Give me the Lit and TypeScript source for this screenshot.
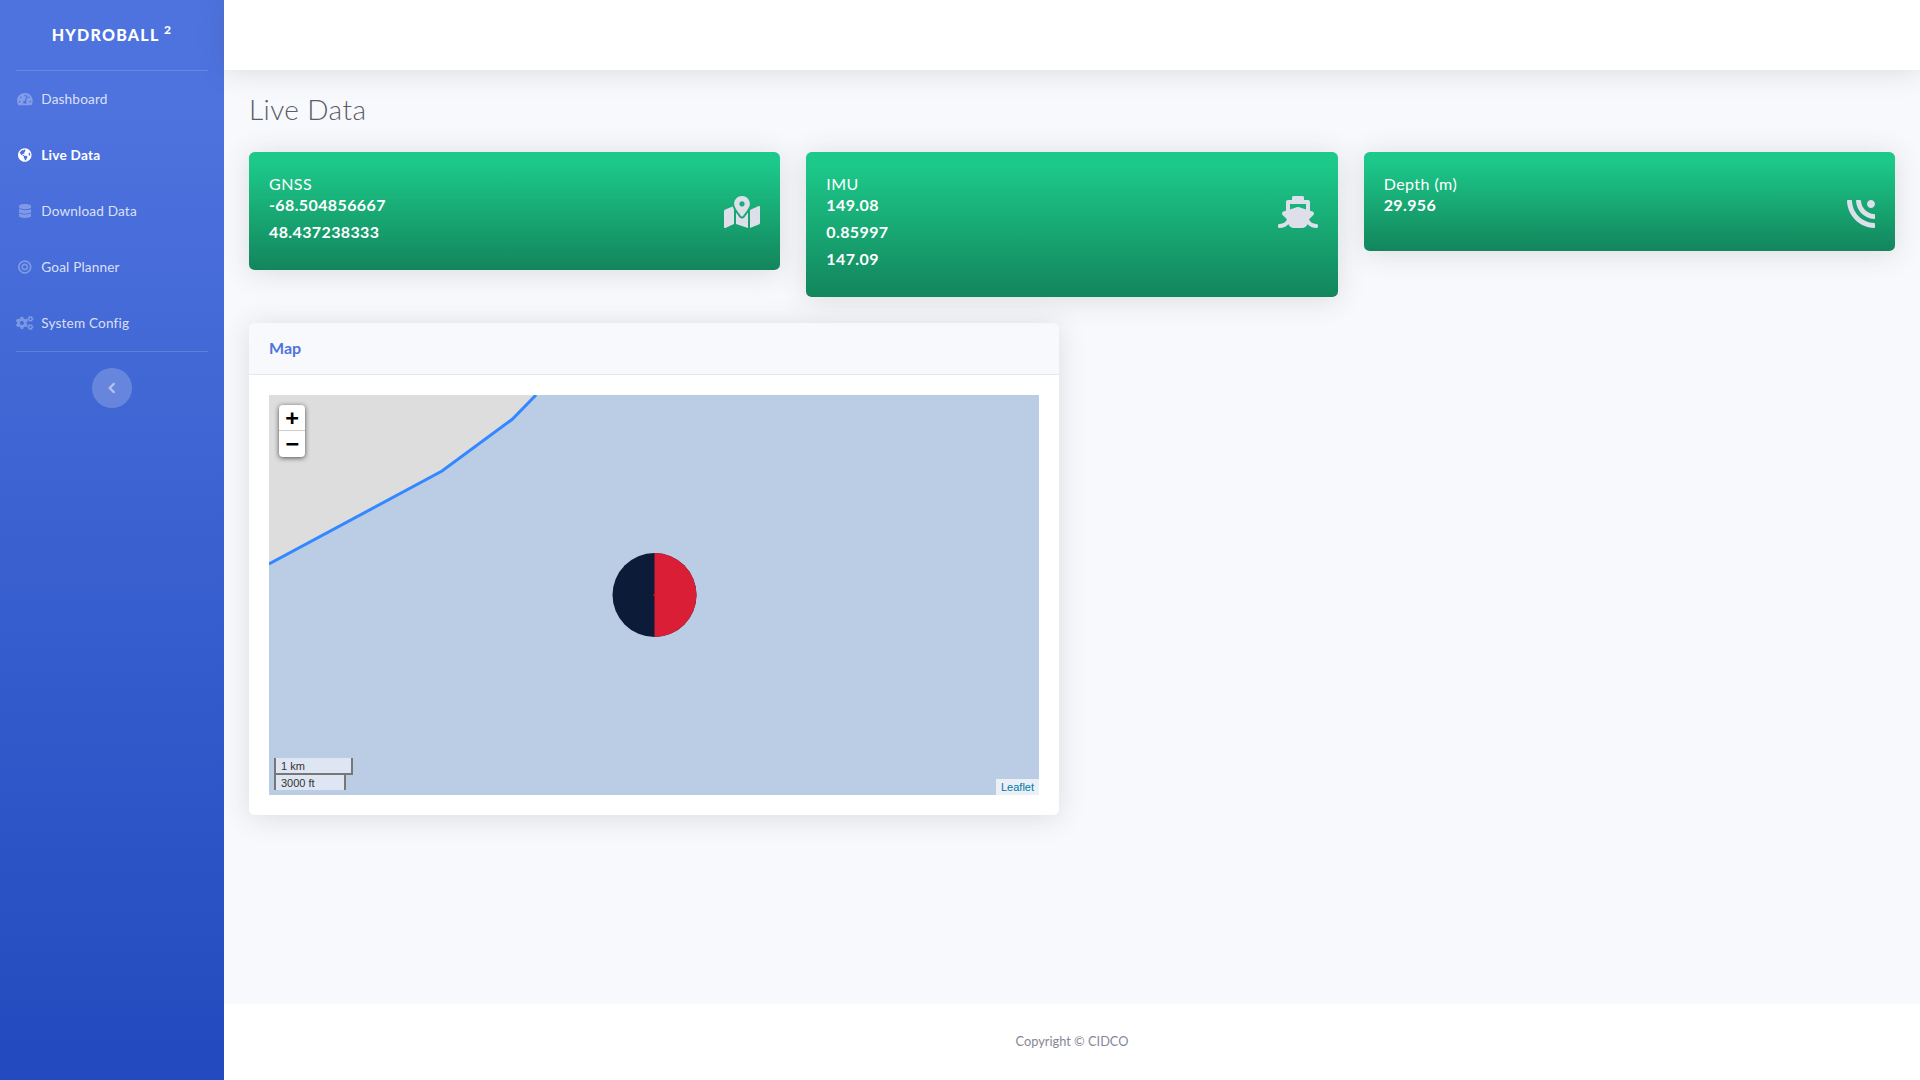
import { LitElement, html, css, svg } from "lit";
import { customElement } from "lit/decorators.js";

const ICONS: Record<string, [number, string]> = {
  dash: [576, "M288 32C128.94 32 0 160.94 0 320c0 52.8 14.25 102.26 39.06 144.8 5.61 9.62 16.3 15.2 27.44 15.2h443c11.14 0 21.83-5.58 27.44-15.2C561.75 422.26 576 372.8 576 320c0-159.06-128.94-288-288-288zm0 64c14.71 0 26.58 10.13 30.32 23.65-1.11 2.26-2.64 4.23-3.45 6.67l-9.22 27.67c-5.13 3.49-10.97 6.01-17.64 6.01-17.67 0-32-14.33-32-32S270.33 96 288 96zM96 384c-17.67 0-32-14.33-32-32s14.33-32 32-32 32 14.33 32 32-14.33 32-32 32zm48-160c-17.67 0-32-14.33-32-32s14.33-32 32-32 32 14.33 32 32-14.33 32-32 32zm246.77-72.41l-61.33 184C343.13 347.33 352 364.54 352 384c0 11.72-3.38 22.55-8.88 32H232.88c-5.5-9.45-8.88-20.28-8.88-32 0-33.94 26.5-61.43 59.9-63.59l61.34-184.01c4.17-12.56 17.73-19.45 30.36-15.17 12.57 4.19 19.35 17.79 15.17 30.36zm14.66 57.2l15.52-46.55c3.47-1.29 7.13-2.23 11.05-2.23 17.67 0 32 14.33 32 32s-14.33 32-32 32c-11.38-.01-20.89-6.28-26.57-15.22zM480 384c-17.67 0-32-14.33-32-32s14.33-32 32-32 32 14.33 32 32-14.33 32-32 32z"],
  globe: [496, "M248 8C111.03 8 0 119.03 0 256s111.03 248 248 248 248-111.03 248-248S384.97 8 248 8zm82.29 357.6c-3.9 3.88-7.99 7.95-11.31 11.28-2.99 3-5.1 6.7-6.17 10.71-1.51 5.66-2.73 11.38-4.77 16.87l-17.39 46.85c-13.76 3-28 4.69-42.65 4.69v-27.38c1.69-12.62-7.64-36.26-22.63-51.25-6-6-9.37-14.14-9.37-22.63v-32.01c0-11.64-6.27-22.34-16.46-27.97-14.37-7.95-34.81-19.06-48.81-26.11-11.48-5.78-22.1-13.14-31.65-21.75l-.8-.72a114.792 114.792 0 0 1-18.06-20.74c-9.38-13.77-24.66-36.42-34.59-51.14 20.47-45.5 57.36-82.04 103.2-101.89l24.01 12.01C203.48 89.74 216 82.01 216 70.11v-11.3c7.99-1.29 16.12-2.11 24.39-2.42l28.3 28.3c6.25 6.25 6.25 16.38 0 22.63L264 112l-10.34 10.34c-3.12 3.12-3.12 8.19 0 11.31l4.69 4.69c3.12 3.12 3.12 8.19 0 11.31l-8 8a8.008 8.008 0 0 1-5.66 2.34h-8.99c-2.08 0-4.08.81-5.58 2.27l-9.92 9.65a8.008 8.008 0 0 0-1.58 9.31l15.59 31.19c2.66 5.32-1.21 11.58-7.15 11.58h-5.64c-1.93 0-3.79-.7-5.24-1.96l-9.28-8.06a16.017 16.017 0 0 0-15.55-3.1l-31.17 10.39a11.95 11.95 0 0 0-8.17 11.34c0 4.53 2.56 8.66 6.61 10.69l11.08 5.54c9.41 4.71 19.79 7.16 30.31 7.16s22.59 27.29 32 32h66.75c8.49 0 16.62 3.37 22.63 9.37l13.69 13.69a30.503 30.503 0 0 1 8.93 21.57 46.536 46.536 0 0 1-13.72 32.98zM417 274.25c-5.79-1.45-10.84-5-14.15-9.97l-17.98-26.97a23.97 23.97 0 0 1 0-26.62l19.59-29.38c2.32-3.47 5.5-6.29 9.24-8.15l12.98-6.49C440.2 193.59 448 223.87 448 256c0 8.67-.74 17.16-1.82 25.54L417 274.25z"],
  db: [448, "M448 73.143v45.714C448 159.143 347.667 192 224 192S0 159.143 0 118.857V73.143C0 32.857 100.333 0 224 0s224 32.857 224 73.143zM448 176v102.857C448 319.143 347.667 352 224 352S0 319.143 0 278.857V176c48.125 33.143 136.208 48.572 224 48.572S399.874 209.143 448 176zm0 160v102.857C448 479.143 347.667 512 224 512S0 479.143 0 438.857V336c48.125 33.143 136.208 48.572 224 48.572S399.874 369.143 448 336z"],
  bull: [496, "M248 8C111.03 8 0 119.03 0 256s111.03 248 248 248 248-111.03 248-248S384.97 8 248 8zm0 432c-101.69 0-184-82.29-184-184 0-101.69 82.29-184 184-184 101.69 0 184 82.29 184 184 0 101.69-82.29 184-184 184zm0-312c-70.69 0-128 57.31-128 128s57.31 128 128 128 128-57.31 128-128-57.31-128-128-128zm0 192c-35.29 0-64-28.71-64-64s28.71-64 64-64 64 28.71 64 64-28.71 64-64 64z"],
  cogs: [640, "M512.1 191l-8.2 14.3c-3 5.3-9.4 7.5-15.1 5.4-11.8-4.4-22.6-10.7-32.1-18.6-4.6-3.8-5.8-10.5-2.8-15.7l8.2-14.3c-6.9-8-12.3-17.3-15.9-27.4h-16.5c-6 0-11.2-4.3-12.2-10.3-2-12-2.1-24.6 0-37.1 1-6 6.2-10.4 12.2-10.4h16.5c3.6-10.1 9-19.4 15.9-27.4l-8.2-14.3c-3-5.2-1.9-11.9 2.8-15.7 9.5-7.9 20.4-14.2 32.1-18.6 5.7-2.1 12.1.1 15.1 5.4l8.2 14.3c10.5-1.9 21.2-1.9 31.7 0L552 6.3c3-5.3 9.4-7.5 15.1-5.4 11.8 4.4 22.6 10.7 32.1 18.6 4.6 3.8 5.8 10.5 2.8 15.7l-8.2 14.3c6.9 8 12.3 17.3 15.9 27.4h16.5c6 0 11.2 4.3 12.2 10.3 2 12 2.1 24.6 0 37.1-1 6-6.2 10.4-12.2 10.4h-16.5c-3.6 10.1-9 19.4-15.9 27.4l8.2 14.3c3 5.2 1.9 11.9-2.8 15.7-9.5 7.9-20.4 14.2-32.1 18.6-5.7 2.1-12.1-.1-15.1-5.4l-8.2-14.3c-10.4 1.9-21.2 1.9-31.7 0zm-10.5-58.8c38.5 29.6 82.4-14.3 52.8-52.8-38.5-29.7-82.4 14.3-52.8 52.8zM386.3 286.1l33.7 16.8c10.1 5.8 14.5 18.1 10.5 29.1-8.9 24.2-26.4 46.4-42.6 65.8-7.4 8.9-20.2 11.1-30.3 5.3l-29.1-16.8c-16 13.7-34.6 24.6-54.9 31.7v33.6c0 11.6-8.3 21.6-19.7 23.6-24.6 4.2-50.4 4.4-75.9 0-11.5-2-20-11.9-20-23.6V418c-20.3-7.2-38.9-18-54.9-31.7L74 403c-10 5.8-22.9 3.6-30.3-5.3-16.2-19.4-33.3-41.6-42.2-65.7-4-10.9.4-23.2 10.5-29.1l33.3-16.8c-3.9-20.9-3.9-42.4 0-63.4L12 205.8c-10.1-5.8-14.6-18.1-10.5-29 8.9-24.2 26-46.4 42.2-65.8 7.4-8.9 20.2-11.1 30.3-5.3l29.1 16.8c16-13.7 34.6-24.6 54.9-31.7V57.1c0-11.5 8.2-21.5 19.6-23.5 24.6-4.2 50.5-4.4 76-.1 11.5 2 20 11.9 20 23.6v33.6c20.3 7.2 38.9 18 54.9 31.7l29.1-16.8c10-5.8 22.9-3.6 30.3 5.3 16.2 19.4 33.2 41.6 42.1 65.8 4 10.9.1 23.2-10 29.1l-33.7 16.8c3.9 21 3.9 42.5 0 63.5zm-117.6 21.1c59.2-77-28.7-164.9-105.7-105.7-59.2 77 28.7 164.9 105.7 105.7zm243.4 182.7l-8.2 14.3c-3 5.3-9.4 7.5-15.1 5.4-11.8-4.4-22.6-10.7-32.1-18.6-4.6-3.8-5.8-10.5-2.8-15.7l8.2-14.3c-6.9-8-12.3-17.3-15.9-27.4h-16.5c-6 0-11.2-4.3-12.2-10.3-2-12-2.1-24.6 0-37.1 1-6 6.2-10.4 12.2-10.4h16.5c3.6-10.1 9-19.4 15.9-27.4l-8.2-14.3c-3-5.2-1.9-11.9 2.8-15.7 9.5-7.9 20.4-14.2 32.1-18.6 5.7-2.1 12.1.1 15.1 5.4l8.2 14.3c10.5-1.9 21.2-1.9 31.7 0l8.2-14.3c3-5.3 9.4-7.5 15.1-5.4 11.8 4.4 22.6 10.7 32.1 18.6 4.6 3.8 5.8 10.5 2.8 15.7l-8.2 14.3c6.9 8 12.3 17.3 15.9 27.4h16.5c6 0 11.2 4.3 12.2 10.3 2 12 2.1 24.6 0 37.1-1 6-6.2 10.4-12.2 10.4h-16.5c-3.6 10.1-9 19.4-15.9 27.4l8.2 14.3c3 5.2 1.9 11.9-2.8 15.7-9.5 7.9-20.4 14.2-32.1 18.6-5.7 2.1-12.1-.1-15.1-5.4l-8.2-14.3c-10.4 1.9-21.2 1.9-31.7 0zM501.6 431c38.5 29.6 82.4-14.3 52.8-52.8-38.5-29.6-82.4 14.3-52.8 52.8z"],
  chev: [320, "M34.52 239.03L228.87 44.69c9.37-9.37 24.57-9.37 33.94 0l22.67 22.67c9.36 9.36 9.37 24.52.04 33.9L131.49 256l154.02 154.75c9.34 9.38 9.32 24.54-.04 33.9l-22.67 22.67c-9.37 9.37-24.57 9.37-33.94 0L34.52 272.97c-9.37-9.37-9.37-24.57 0-33.94z"],
  map: [576, "M288 0c-69.59 0-126 56.41-126 126 0 56.26 82.35 158.8 113.9 196.02 6.39 7.54 17.82 7.54 24.2 0C331.65 284.8 414 182.26 414 126 414 56.41 357.59 0 288 0zm0 168c-23.2 0-42-18.8-42-42s18.8-42 42-42 42 18.8 42 42-18.8 42-42 42zM20.12 215.95A32.006 32.006 0 0 0 0 245.66v250.32c0 11.32 11.43 19.06 21.94 14.86L160 448V214.92c-8.84-15.98-16.07-31.54-21.25-46.42L20.12 215.95zM288 359.67c-14.07 0-27.38-6.18-36.51-16.96-19.66-23.2-40.57-49.62-59.49-76.72V448l192 64V265.99c-18.92 27.09-39.82 53.52-59.49 76.72-9.13 10.77-22.44 16.96-36.51 16.96zm266.06-198.51L416 224v288l139.88-55.95A31.996 31.996 0 0 0 576 426.34V176.02c0-11.32-11.43-19.06-21.94-14.86z"],
  ship: [640, "M496.616 372.639l70.012-70.012c16.899-16.9 9.942-45.771-12.836-53.092L512 236.102V96c0-17.673-14.327-32-32-32h-64V24c0-13.255-10.745-24-24-24H248c-13.255 0-24 10.745-24 24v40h-64c-17.673 0-32 14.327-32 32v140.102l-41.792 13.433c-22.753 7.313-29.754 36.173-12.836 53.092l70.012 70.012C125.828 416.287 85.587 448 24 448c-13.255 0-24 10.745-24 24v16c0 13.255 10.745 24 24 24 61.023 0 107.499-20.61 143.258-59.396C181.677 487.432 216.021 512 256 512h128c39.979 0 74.323-24.568 88.742-59.396C508.495 491.384 554.968 512 616 512c13.255 0 24-10.745 24-24v-16c0-13.255-10.745-24-24-24-60.817 0-101.542-31.001-119.384-75.361zM192 128h256v87.531l-118.208-37.995a31.995 31.995 0 0 0-19.584 0L192 215.531V128z"],
  rss: [448, "M128.081 415.959c0 35.369-28.672 64.041-64.041 64.041S0 451.328 0 415.959s28.672-64.041 64.041-64.041 64.04 28.673 64.04 64.041zm175.66 47.25c-8.354-154.6-132.185-278.587-286.95-286.95C7.656 175.765 0 183.105 0 192.253v48.069c0 8.415 6.49 15.472 14.887 16.018 111.832 7.284 201.473 96.702 208.772 208.772.547 8.397 7.604 14.887 16.018 14.887h48.069c9.149.001 16.489-7.655 15.995-16.79zm144.249.288C439.596 229.677 251.465 40.445 16.503 32.01 7.473 31.686 0 38.981 0 48.016v48.068c0 8.625 6.835 15.645 15.453 15.999 191.179 7.839 344.627 161.316 352.465 352.465.353 8.618 7.373 15.453 15.999 15.453h48.068c9.034-.001 16.329-7.474 16.005-16.504z"],
};

function icon(name: string, size: number, cls = "") {
  const [w, d] = ICONS[name];
  const width = (w / 512) * size;
  return svg`<svg class=${cls} xmlns="http://www.w3.org/2000/svg" viewBox="0 0 ${w} 512" width=${width} height=${size} fill="currentColor"><path d=${d}></path></svg>`;
}

const NAV = [
  { label: "Dashboard", icon: "dash" },
  { label: "Live Data", icon: "globe", active: true },
  { label: "Download Data", icon: "db" },
  { label: "Goal Planner", icon: "bull" },
  { label: "System Config", icon: "cogs" },
];

const CARDS = [
  { title: "GNSS", values: ["-68.504856667", "48.437238333"], icon: "map", cls: "" },
  { title: "IMU", values: ["149.08", "0.85997", "147.09"], icon: "ship", cls: "" },
  { title: "Depth (m)", values: ["29.956"], icon: "rss", cls: "flip" },
];

@customElement("app-root")
export class AppRoot extends LitElement {
  static styles = css`
    :host {
      display: block;
      font-family: "Lato", "Noto Sans", sans-serif;
      font-size: 16px;
      color: #858796;
    }
    * { box-sizing: border-box; }
    .wrapper { display: flex; min-height: 100vh; }
    .sidebar {
      width: 224px;
      flex: none;
      background: linear-gradient(180deg, #4e73df 10%, #224abe 100%);
      display: flex;
      flex-direction: column;
      align-items: stretch;
    }
    .brand {
      height: 70px;
      display: flex;
      align-items: center;
      justify-content: center;
      color: #fff;
      font-weight: 900;
      font-size: 16px;
      letter-spacing: 1.25px;
      text-transform: uppercase;
      white-space: pre;
      padding-bottom: 2px;
    }
    .brand sup { font-size: 12px; line-height: 0; position: relative; top: -0.3em; vertical-align: baseline; }
    .divider { height: 1px; margin: 0 16px; background: rgba(255, 255, 255, 0.15); flex: none; }
    .nav { display: flex; flex-direction: column; }
    .nav-link {
      height: 56px;
      padding: 0 16px;
      display: flex;
      align-items: center;
      font-size: 13.6px;
      letter-spacing: 0.17px;
      color: rgba(255, 255, 255, 0.8);
    }
    .nav-link.active { color: #fff; font-weight: 700; letter-spacing: 0.25px; }
    .nav-icon { width: 18px; margin-right: 7.3px; display: flex; justify-content: center; color: rgba(255, 255, 255, 0.3); }
    .nav-link.active .nav-icon { color: #fff; }
    .toggle-wrap { display: flex; justify-content: center; padding-top: 16px; }
    .toggle {
      width: 40px; height: 40px; border-radius: 50%;
      background: rgba(255, 255, 255, 0.2);
      color: #fff;
      display: flex; align-items: center; justify-content: center;
    }
    .toggle svg { opacity: 0.5; stroke: #fff; stroke-width: 24px; }
    .content { flex: 1; min-width: 0; display: flex; flex-direction: column; background: #f8f9fc; }
    .topbar { height: 70px; background: #fff; box-shadow: 0 2.4px 28px 0 rgba(58, 59, 69, 0.15); margin-bottom: 24px; flex: none; }
    .main { flex: 1; padding: 0 25px; }
    h1 { margin: 0 0 26px; font-size: 28px; line-height: 31.6px; font-weight: 300; letter-spacing: 0.4px; color: #5a5c69; }
    .cards { display: grid; grid-template-columns: repeat(3, 1fr); gap: 25px 26px; align-items: start; margin-bottom: 26px; }
    .stat {
      border-radius: 5.6px;
      padding: 20px;
      display: flex;
      justify-content: space-between;
      color: #fff;
      background: linear-gradient(180deg, #1cc88a 10%, #13855c 100%);
      box-shadow: 0 2.4px 28px 0 rgba(58, 59, 69, 0.15);
    }
    .stat-title { line-height: 24px; letter-spacing: 0.45px; }
    .stat-val { font-weight: 700; line-height: 17.2px; margin-bottom: 10px; letter-spacing: 0.38px; }
    .stat-icon { padding-top: 24px; height: 59px; color: #dddfeb; flex: none; }
    .flip { transform: rotate(180deg); display: block; margin-top: 2px; }
    .stat-icon svg { display: block; }
    .map-card {
      width: calc((100% - 26px) / 2);
      background: #fff;
      border-radius: 5.6px;
      box-shadow: 0 2.4px 28px 0 rgba(58, 59, 69, 0.15);
      overflow: hidden;
    }
    .map-head { height: 52px; padding: 0 20px 2px; display: flex; align-items: center; background: #f8f9fc; border-bottom: 1px solid #e3e6f0; color: #4e73df; font-weight: 700; }
    .map-body { padding: 20px; }
    .map { position: relative; height: 400px; background: #bbcce5; overflow: hidden; font-family: "Liberation Sans", Arial, sans-serif; }
    .map > svg { position: absolute; inset: 0; width: 100%; height: 100%; }
    .zoom { position: absolute; left: 10px; top: 10px; width: 26px; border-radius: 4px; background: #fff; box-shadow: 0 1px 5px rgba(0, 0, 0, 0.65); }
    .zoom div { height: 26px; display: flex; align-items: center; justify-content: center; color: #000; font: bold 22px/26px "DejaVu Sans Mono", monospace; }
    .zoom div:first-child { border-bottom: 1px solid #ccc; }
    .scale { position: absolute; left: 5px; bottom: 5px; font-size: 11px; color: #333; }
    .scale div { border: 2px solid #777; line-height: 1.1; padding: 2px 5px 1px; background: rgba(255, 255, 255, 0.5); white-space: nowrap; }
    .s1 { border-top: none !important; width: 79px; }
    .s2 { border-bottom: none !important; width: 72px; margin-top: -2px; }
    .attr { position: absolute; right: 0; bottom: 0; padding: 0 5px; background: rgba(255, 255, 255, 0.7); font-size: 11px; line-height: 16px; color: #0078a8; }
    footer { height: 76px; padding-bottom: 2px; background: #fff; display: flex; align-items: center; justify-content: center; font-size: 12.8px; color: #858796; flex: none; }
  `;

  render() {
    return html`
      <div class="wrapper">
        <aside class="sidebar">
          <div class="brand">Hydroball <sup>2</sup></div>
          <div class="divider"></div>
          <nav class="nav">
            ${NAV.map(
              (n) => html`<div class="nav-link ${n.active ? "active" : ""}">
                <span class="nav-icon">${icon(n.icon, 14)}</span>
                <span>${n.label}</span>
              </div>`
            )}
          </nav>
          <div class="divider"></div>
          <div class="toggle-wrap"><div class="toggle">${icon("chev", 12)}</div></div>
        </aside>
        <div class="content">
          <div class="topbar"></div>
          <main class="main">
            <h1>Live Data</h1>
            <section class="cards">
              ${CARDS.map(
                (c) => html`<div class="stat">
                  <div>
                    <div class="stat-title">${c.title}</div>
                    ${c.values.map((v) => html`<div class="stat-val">${v}</div>`)}
                  </div>
                  <div class="stat-icon">${icon(c.icon, 32, c.cls)}</div>
                </div>`
              )}
            </section>
            <section class="map-card">
              <div class="map-head">Map</div>
              <div class="map-body">
                <div class="map">
                  <svg viewBox="0 0 770 400" preserveAspectRatio="none">
                    <path d="M0 0H267L243 24.5L173 76L0 169Z" fill="#ddd"></path>
                    <path d="M0 169L173 76L243 24.5L267 0" fill="none" stroke="#3388ff" stroke-width="3"></path>
                    <circle cx="385.5" cy="200" r="42" fill="#0b1b38"></circle>
                    <path d="M385.5 158A42 42 0 0 1 385.5 242Z" fill="#d91e36"></path>
                    <rect x="384.5" y="199" width="2" height="2" fill="#e01010"></rect>
                  </svg>
                  <div class="zoom"><div>+</div><div>−</div></div>
                  <div class="scale"><div class="s1">1 km</div><div class="s2">3000 ft</div></div>
                  <div class="attr">Leaflet</div>
                </div>
              </div>
            </section>
          </main>
          <footer>Copyright © CIDCO</footer>
        </div>
      </div>
    `;
  }
}
